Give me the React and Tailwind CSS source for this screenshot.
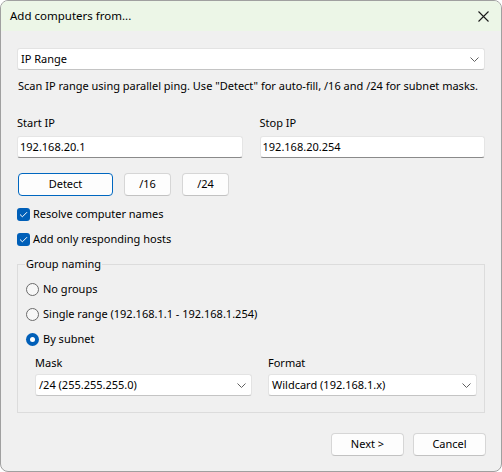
import { useState } from 'react'

const font = { fontFamily: '"Noto Sans", "Open Sans", sans-serif' }

function Chevron() {
  return (
    <svg width="9" height="5" viewBox="0 0 9 5" className="shrink-0">
      <path d="M0.5 0.5 L4.5 4.5 L8.5 0.5" fill="none" stroke="#606060" strokeWidth="1" />
    </svg>
  )
}

function Select({ value, className = '' }) {
  return (
    <div className={`h-[22px] bg-white border border-[#e3e3e3] border-b-[#c4c4c4] rounded-[3px] flex items-center justify-between pl-[3px] pr-[5px] ${className}`}>
      <span>{value}</span>
      <Chevron />
    </div>
  )
}

function TextBox({ value }) {
  return (
    <div className="h-[22px] bg-white border border-[#e5e5e5] border-b-[#8a8a8a] rounded-[3px] flex items-center pl-[2px]">
      {value}
    </div>
  )
}

function Button({ children, primary, className = '' }) {
  return (
    <button className={`h-[23px] rounded-[4px] bg-[#fdfdfd] flex items-center justify-center ${primary ? 'border border-[#0067c0]' : 'border border-[#d6d6d6] border-b-[#c2c2c2]'} ${className}`}>
      {children}
    </button>
  )
}

function Checkbox({ label, checked }) {
  return (
    <label className="flex items-center gap-[3px] h-4">
      <span className="w-[13px] h-[13px] rounded-[3px] bg-[#005fb8] flex items-center justify-center">
        {checked && (
          <svg width="9" height="7" viewBox="0 0 9 7">
            <path d="M1 3.5 L3.4 5.8 L8 1.2" fill="none" stroke="white" strokeWidth="1" />
          </svg>
        )}
      </span>
      <span>{label}</span>
    </label>
  )
}

function Radio({ label, checked, onClick }) {
  return (
    <label className="flex items-center gap-[4px] h-4" onClick={onClick}>
      {checked ? (
        <span className="w-[13px] h-[13px] rounded-full bg-[#005fb8] flex items-center justify-center">
          <span className="w-[5px] h-[5px] rounded-full bg-white" />
        </span>
      ) : (
        <span className="w-[13px] h-[13px] rounded-full border border-[#6b6b6b] bg-[#f7f7f7]" />
      )}
      <span>{label}</span>
    </label>
  )
}

export default function App() {
  const [group, setGroup] = useState('subnet')

  return (
    <div className="w-[502px] h-[472px] bg-white text-[11px] text-black" style={font}>
      <div className="w-[502px] h-[472px] rounded-[8px] border border-[#a0a0a0] bg-[#f0f0f0] overflow-hidden flex flex-col">
        <div className="h-[30px] bg-[#ecf6e7] flex items-center justify-between pl-[9px] pr-[12px] shrink-0">
          <span className="text-[11.5px]">Add computers from...</span>
          <svg width="11" height="11" viewBox="0 0 11 11">
            <path d="M0.5 0.5 L10.5 10.5 M10.5 0.5 L0.5 10.5" stroke="#1a1a1a" strokeWidth="1.1" />
          </svg>
        </div>

        <div className="flex flex-col pl-[16px] pr-[16px] pt-[17px]">
          <Select value="IP Range" />
          <p className="mt-[8px] leading-4 pl-[1px] whitespace-nowrap">
            Scan IP range using parallel ping. Use "Detect" for auto-fill, /16 and /24 for subnet masks.
          </p>

          <div className="grid grid-cols-2 gap-x-[17px] mt-[21px]">
            <div className="flex flex-col">
              <span className="leading-4">Start IP</span>
              <div className="mt-[5px]"><TextBox value="192.168.20.1" /></div>
            </div>
            <div className="flex flex-col">
              <span className="leading-4">Stop IP</span>
              <div className="mt-[5px]"><TextBox value="192.168.20.254" /></div>
            </div>
          </div>

          <div className="flex gap-[11px] mt-[15px] pl-[1px]">
            <Button primary className="w-[95px]">Detect</Button>
            <Button className="w-[47px]">/16</Button>
            <Button className="w-[47px]">/24</Button>
          </div>

          <div className="flex flex-col gap-[9px] mt-[10px]">
            <Checkbox checked label="Resolve computer names" />
            <Checkbox checked label="Add only responding hosts" />
          </div>

          <fieldset className="mt-[9px] border border-[#dcdcdc] px-[7px] pb-[14px] h-[157px]">
            <legend className="px-px leading-4">Group naming</legend>
            <div className="flex flex-col gap-[9px] pt-[9px] pl-[1px]">
              <Radio label="No groups" checked={group === 'none'} onClick={() => setGroup('none')} />
              <Radio label="Single range (192.168.1.1 - 192.168.1.254)" checked={group === 'single'} onClick={() => setGroup('single')} />
              <Radio label="By subnet" checked={group === 'subnet'} onClick={() => setGroup('subnet')} />
            </div>
            <div className="grid grid-cols-[217px_209px] gap-x-[16px] mt-[8px] pl-[10px]">
              <div className="flex flex-col">
                <span className="leading-4">Mask</span>
                <Select value="/24 (255.255.255.0)" className="mt-[3px]" />
              </div>
              <div className="flex flex-col">
                <span className="leading-4">Format</span>
                <Select value="Wildcard (192.168.1.x)" className="mt-[3px]" />
              </div>
            </div>
          </fieldset>

          <div className="flex justify-end gap-[9px] mt-[20px] -mr-[1px]">
            <Button className="w-[73px]">Next &gt;</Button>
            <Button className="w-[73px]">Cancel</Button>
          </div>
        </div>
      </div>
    </div>
  )
}
